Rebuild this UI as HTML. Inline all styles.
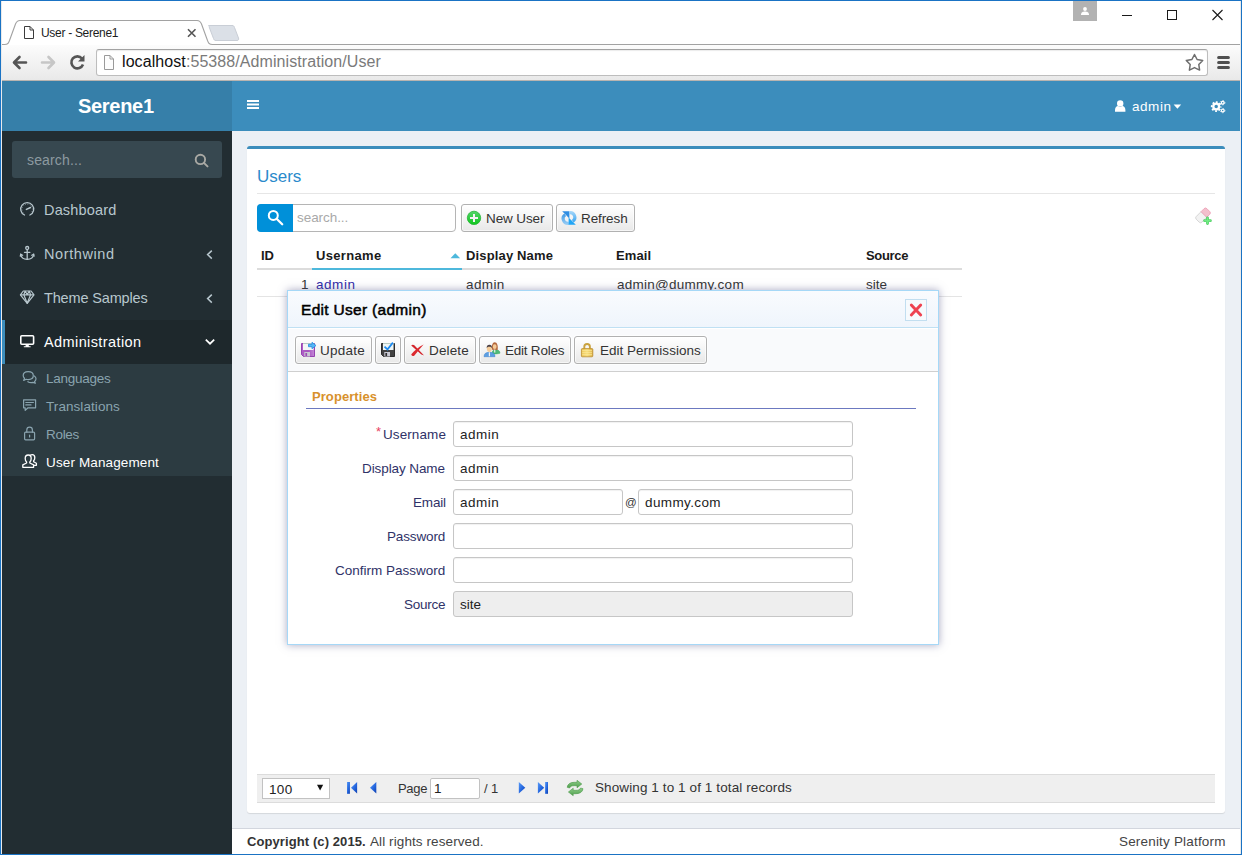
<!DOCTYPE html>
<html><head><meta charset="utf-8"><title>User - Serene1</title>
<style>
*{box-sizing:border-box}
html,body{margin:0;padding:0}
body{width:1242px;height:855px;position:relative;overflow:hidden;background:#fff;font-family:"Liberation Sans",sans-serif;font-size:13px;color:#333}
.a{position:absolute}
.t{position:absolute;white-space:nowrap;line-height:20px;height:20px}
svg{position:absolute;overflow:visible}
#frame{left:0;top:0;width:1242px;height:855px;border:1px solid #1a73c4;pointer-events:none}
#frame2{left:1px;top:1px;width:1240px;height:853px;border:1px solid #eaeaea;border-top:none;border-bottom:none;pointer-events:none}
#titlebar{left:1px;top:1px;width:1240px;height:44px;background:#fff}
#toolbar{left:1px;top:45px;width:1240px;height:36px;background:linear-gradient(#fcfcfc,#e9e9e9);border-bottom:1px solid #b9b4b0}
#url{left:96px;top:49px;width:1112px;height:27px;background:#fff;border:1px solid #bdbdbd;border-top-color:#a2a2a2;border-radius:3px;box-shadow:inset 0 1px 1px rgba(0,0,0,.08)}
.btn{position:absolute;border:1px solid #b1b1b1;border-radius:3px;background:linear-gradient(#ffffff,#f4f4f4 50%,#e8e8e8);box-shadow:inset 0 0 0 1px rgba(255,255,255,.6),0 0 0 1px rgba(255,255,255,.7)}
.inp{position:absolute;height:26px;border:1px solid #c6c6c6;border-radius:3px;background:#fff;box-shadow:inset 0 1px 1px rgba(0,0,0,.06)}
</style></head><body>
<div class="a" id="titlebar"></div>
<div class="a" id="toolbar"></div>
<div class="a" id="url"></div>
<!-- tab strip -->
<svg class="a" style="left:0;top:0" width="1242" height="46" viewBox="0 0 1242 46">
 <path d="M4.5 45 C8 44.5 8.5 43 9.5 40.5 L15.5 24 C16.5 21.5 17.5 21 20 21 H197 C199.5 21 200.5 21.5 201.5 24 L207.5 40.5 C208.5 43 209 44.5 212.5 45 Z" fill="#fff"/>
 <path d="M1 44.5 H4.5 C8 44.5 8.5 43 9.5 40.5 L15.5 24 C16.5 21.5 17.5 20.5 20 20.5 H197 C199.5 20.5 200.5 21.5 201.5 24 L207.5 40.5 C208.5 43 209 44.5 212.5 44.5 H1241" fill="none" stroke="#a2a2a2" stroke-width="1.1"/>
 <path d="M208.5 25.5 H232 C233.5 25.5 234 26 234.5 27.5 L238.5 38 C239 39.5 238.5 40.5 237 40.5 H216 C214.5 40.5 214 40 213.5 38.5 L209.5 28 C209 26.5 209 25.5 210.5 25.5 Z" fill="#dbe0e7" stroke="#c9ced6" stroke-width="1"/>
 <!-- tab page icon -->
 <path d="M24.5 26.5 H30 L33.5 30 V38.5 H24.5 Z M30 26.5 V30 H33.5" fill="#fff" stroke="#3c3c3c" stroke-width="1"/>
 <!-- tab close -->
 <path d="M188 29.300 L195.500 36.800 M195.500 29.300 L188 36.800" stroke="#555" stroke-width="1.600" fill="none"/>
 <!-- user button -->
 <rect x="1073" y="1" width="24" height="20" fill="#b2b2b2"/>
 <circle cx="1085" cy="9" r="1.9" fill="#fff"/><path d="M1081 15 C1081 12 1083 11.5 1085 11.5 C1087 11.5 1089 12 1089 15 Z" fill="#fff"/>
 <!-- window controls -->
 <path d="M1122 15.500 H1132" stroke="#1a1a1a" stroke-width="1"/>
 <rect x="1167.500" y="10.500" width="9" height="9" fill="none" stroke="#1a1a1a" stroke-width="1"/>
 <path d="M1212.500 10 L1222.500 20 M1222.500 10 L1212.500 20" stroke="#1a1a1a" stroke-width="1.1"/>
</svg>
<!-- nav buttons -->
<svg class="a" style="left:0;top:45px" width="1242" height="36" viewBox="0 45 1242 36">
 <path d="M26 62.500 H14.500 M19.500 57 L14 62.500 L19.500 68" fill="none" stroke="#555" stroke-width="2.600" stroke-linecap="round" stroke-linejoin="round"/>
 <path d="M42 62.500 H53.500 M48.500 57 L54 62.500 L48.500 68" fill="none" stroke="#c6c6c6" stroke-width="2.600" stroke-linecap="round" stroke-linejoin="round"/>
 <path d="M82 58.500 A6 6 0 1 0 83 64.500" fill="none" stroke="#555" stroke-width="2.600"/>
 <path d="M84.500 55 V61.500 H78 Z" fill="#555"/>
 <!-- url page icon -->
 <path d="M104.500 55.500 H110 L113.500 59 V69.500 H104.500 Z M110 55.500 V59 H113.500" fill="#fdfdfd" stroke="#9a9a9a" stroke-width="1"/>
 <!-- star -->
 <path d="M1194.5 54.5 L1197.1 59.5 L1202.7 60.4 L1198.8 64.5 L1199.6 70.1 L1194.5 67.6 L1189.4 70.1 L1190.2 64.5 L1186.3 60.4 L1191.9 59.5 Z" fill="#fff" stroke="#6e6e6e" stroke-width="1.500" stroke-linejoin="round"/>
 <!-- menu -->
 <path d="M1218.600 57.500 H1228.400 M1218.600 62.500 H1228.400 M1218.600 67.500 H1228.400" stroke="#505050" stroke-width="3" stroke-linecap="round"/>
</svg>
<!-- ===== page backgrounds ===== -->
<div class="a" style="left:2px;top:81px;width:1238px;height:773px;background:#ecf0f5"></div>
<div class="a" style="left:2px;top:81px;width:230px;height:50px;background:#367fa9"></div>
<div class="a" style="left:232px;top:81px;width:1008px;height:50px;background:#3c8dbc"></div>
<div class="a" style="left:2px;top:131px;width:230px;height:723px;background:#222d32"></div>
<div class="a" style="left:12px;top:141px;width:210px;height:37px;background:#374850;border-radius:3px"></div>
<div class="a" style="left:2px;top:320px;width:230px;height:44px;background:#1e282c;border-left:3px solid #3c8dbc"></div>
<div class="a" style="left:2px;top:364px;width:230px;height:112px;background:#2c3b41"></div>
<!-- content box -->
<div class="a" style="left:247px;top:146px;width:978px;height:667px;background:#fff;border-top:3px solid #3c8dbc;border-radius:3px;box-shadow:0 1px 1px rgba(0,0,0,.1)"></div>
<div class="a" style="left:257px;top:193px;width:958px;height:1px;background:#e6e6e6"></div>
<!-- footer -->
<div class="a" style="left:232px;top:828px;width:1008px;height:26px;background:#fff;border-top:1px solid #d2d6de"></div>
<!-- quick search -->
<div class="a" style="left:257px;top:204px;width:199px;height:28px;border:1px solid #b5b5b5;border-radius:4px;background:#fff"></div>
<div class="a" style="left:257px;top:204px;width:36px;height:28px;background:#0090d9;border-radius:4px 0 0 4px"></div>
<svg style="left:257px;top:204px" width="36" height="28" viewBox="257 204 36 28"><circle cx="273.300" cy="215.400" r="4.500" fill="none" stroke="#fff" stroke-width="2"/><path d="M276.600 218.700 L282.200 224.200" stroke="#fff" stroke-width="2.300" stroke-linecap="round"/></svg>
<!-- grid toolbar buttons -->
<div class="btn" style="left:461px;top:204px;width:92px;height:28px"></div>
<div class="btn" style="left:556px;top:204px;width:79px;height:28px"></div>
<!-- grid header lines -->
<div class="a" style="left:257px;top:268px;width:705px;height:2px;background:#dcdcdc"></div>
<div class="a" style="left:312px;top:268px;width:150px;height:2px;background:#4db8dc"></div>
<div class="a" style="left:257px;top:296px;width:705px;height:1px;background:#e4e4e4"></div>
<svg style="left:450px;top:252px" width="12" height="8" viewBox="450 252 12 8"><path d="M450.500 258.200 L455.300 253.200 L460.100 258.200 Z" fill="#4db8dc"/></svg>
<!-- pager -->
<div class="a" style="left:257px;top:774px;width:958px;height:29px;background:#efefef;border-top:1px solid #dcdcdc;border-bottom:1px solid #dcdcdc"></div>
<div class="a" style="left:262px;top:778px;width:68px;height:21px;background:#fff;border:1px solid #c2c2c2"></div>
<div class="a" style="left:430px;top:778px;width:50px;height:21px;background:#fff;border:1px solid #c2c2c2;border-radius:2px"></div>
<svg style="left:257px;top:774px" width="400" height="29" viewBox="257 774 400 29">
<defs><linearGradient id="pb" x1="0" y1="0" x2="1" y2="1"><stop offset="0" stop-color="#5a9cf8"/><stop offset=".55" stop-color="#2466de"/><stop offset="1" stop-color="#0f3fae"/></linearGradient>
<linearGradient id="gg" x1="0" y1="0" x2="0" y2="1"><stop offset="0" stop-color="#8fce8a"/><stop offset="1" stop-color="#4f9f4d"/></linearGradient></defs>
<path d="M317 784.800 H323.200 L320.100 790.400 Z" fill="#111"/>
<rect x="347" y="782" width="2.900" height="11.800" fill="url(#pb)"/><path d="M357.100 782 V793.400 L351 787.700 Z" fill="url(#pb)"/>
<path d="M376.300 782 V793.400 L370 787.700 Z" fill="url(#pb)"/>
<path d="M518.800 782 V793.400 L525.300 787.700 Z" fill="url(#pb)"/>
<path d="M537.900 782 V793.400 L544.200 787.700 Z" fill="url(#pb)"/><rect x="545.100" y="782" width="2.900" height="11.800" fill="url(#pb)"/>
<!-- green refresh -->
<path d="M567.200 787.300 C567.600 783.800 570.600 782.300 574.200 782.300 H577 V780.300 L581.800 784 L577 787.800 V785.700 H574.400 C571.800 785.700 570.300 786.200 569.600 788 Z" fill="url(#gg)" stroke="#4c994a" stroke-width=".6"/>
<path d="M583 788.700 C582.600 792.200 579.600 793.700 576 793.700 H573.200 V795.700 L568.400 792 L573.200 788.200 V790.300 H575.800 C578.400 790.300 579.900 789.800 580.600 788 Z" fill="url(#gg)" stroke="#4c994a" stroke-width=".6"/>
</svg>
<!-- header + sidebar icons -->
<svg style="left:0;top:81px" width="1242" height="400" viewBox="0 81 1242 400" fill="none">
<!-- hamburger -->
<path d="M247 101 H259 M247 104.500 H259 M247 108 H259" stroke="#fff" stroke-width="2"/>
<!-- user -->
<circle cx="1120.200" cy="103.400" r="3.200" fill="#fff"/>
<path d="M1115 111.700 V110 C1115 107.200 1116.600 106.200 1118 106 C1119.300 106.900 1121.100 106.900 1122.400 106 C1123.800 106.200 1125.400 107.200 1125.400 110 V111.700 Z" fill="#fff"/>
<!-- caret -->
<path d="M1173.600 104.500 H1181.200 L1177.400 108.800 Z" fill="#fff"/>
<!-- gears -->
<g fill="none" stroke="#fff">
<circle cx="1216.200" cy="106.600" r="2.900" stroke-width="2.300"/>
<circle cx="1216.200" cy="106.600" r="4.500" stroke-width="1.700" stroke-dasharray="1.850 1.684" stroke-dashoffset=".9"/>
<circle cx="1222.700" cy="102.700" r="1.350" stroke-width="1.200"/>
<circle cx="1222.700" cy="102.700" r="2.150" stroke-width="1" stroke-dasharray="1.100 1.151"/>
<circle cx="1222.700" cy="110.600" r="1.350" stroke-width="1.200"/>
<circle cx="1222.700" cy="110.600" r="2.150" stroke-width="1" stroke-dasharray="1.100 1.151"/>
</g>
<!-- sidebar search -->
<circle cx="200.400" cy="159.400" r="4.700" stroke="#a9a9a4" stroke-width="1.900"/>
<path d="M203.900 162.900 L207.500 166.400" stroke="#a9a9a4" stroke-width="2" stroke-linecap="round"/>
<!-- dashboard gauge -->
<g stroke="#b8c7ce" stroke-linecap="round">
<path d="M24.500 215 A6.500 6.500 0 1 1 29.900 215" stroke-width="1.300"/>
<path d="M26.400 209.400 L30.500 207.500" stroke-width="1.500"/>
<path d="M23 212.500 A5.200 5.200 0 1 1 31.400 212.500" stroke-width="1" stroke-dasharray=".6 1.700" stroke-linecap="butt" opacity=".8"/>
</g>
<!-- anchor -->
<g stroke="#b8c7ce" stroke-width="1.300" stroke-linecap="round">
<circle cx="27.200" cy="248" r="1.500"/>
<path d="M27.200 249.600 V259.300 M24.500 252.300 H29.900"/>
<path d="M20.800 254.500 C21.200 257.500 23.500 259.300 27.200 259.300 C30.900 259.300 33.200 257.500 33.600 254.500"/>
<path d="M20.300 256.200 L20.800 254.200 L22.600 255.200 M34.100 256.200 L33.600 254.200 L31.800 255.200"/>
</g>
<!-- diamond -->
<g stroke="#b8c7ce" stroke-width="1.200" stroke-linejoin="round">
<path d="M23.300 291 H31.100 L34 294.800 L27.200 303.300 L20.400 294.800 Z"/>
<path d="M20.400 294.800 H34 M25.200 291 L23.800 294.800 L27.200 303.300 L30.600 294.800 L29.200 291 M25.200 291 L27.200 294.800 L29.200 291"/>
</g>
<!-- monitor -->
<rect x="20.800" y="335.800" width="12.800" height="8.400" rx="1" stroke="#fff" stroke-width="1.600"/>
<path d="M25.600 344.500 H28.800 V346.200 H30.600 V347.200 H23.800 V346.200 H25.600 Z" fill="#fff"/>
<!-- chevrons -->
<path d="M211.800 250.600 L207.600 254.600 L211.800 258.600 M211.800 294.600 L207.600 298.600 L211.800 302.600" stroke="#b8c7ce" stroke-width="1.500"/>
<path d="M205.800 339.600 L210 343.700 L214.200 339.600" stroke="#fff" stroke-width="1.700"/>
<!-- submenu icons -->
<g stroke="#8aa4af" stroke-width="1.200" stroke-linejoin="round" stroke-linecap="round">
<!-- languages: two bubbles -->
<path d="M28.200 371.600 C31.300 371.600 33.300 373.300 33.300 375.600 C33.300 377.900 31.300 379.600 28.200 379.600 C27.500 379.600 26.800 379.500 26.200 379.300 L23.700 380.400 L24.500 378.300 C23.600 377.600 23.200 376.700 23.200 375.600 C23.200 373.300 25.200 371.600 28.200 371.600 Z"/>
<path d="M34.300 376 C35.400 376.700 36 377.700 36 378.800 C36 379.900 35.500 380.800 34.600 381.500 L35.300 383.300 L33 382.400 C32.400 382.600 31.800 382.700 31.100 382.700 C29.800 382.700 28.700 382.300 27.900 381.700"/>
<!-- translations: message -->
<path d="M23.600 399.800 H35.600 V407.800 H28 L25.200 410.400 V407.800 H23.600 Z"/>
<path d="M25.800 402.500 H33.400 M25.800 404.900 H31"/>
<!-- lock -->
<rect x="24.600" y="432.200" width="10" height="7.600" rx="1"/>
<path d="M26.800 432.200 V430 A2.800 2.800 0 0 1 32.400 430 V432.200 M29.600 435.200 V437"/>
</g>
<!-- users (white) -->
<g stroke="#fff" stroke-width="1.300" stroke-linejoin="round" stroke-linecap="round">
<path d="M28.200 455 C30 455 31.200 456.400 31.200 458.400 C31.200 460 30.600 461.200 29.800 461.900 V463 L33.600 464.800 V467.300 H22.800 V464.800 L26.600 463 V461.900 C25.800 461.200 25.200 460 25.200 458.400 C25.200 456.400 26.400 455 28.200 455 Z"/>
<path d="M30.200 455.200 C31 454.700 31.600 454.600 32.200 454.600 C33.800 454.600 34.800 455.900 34.800 457.700 C34.800 459.100 34.300 460.200 33.600 460.800 V461.700 L36.400 463.200 V465.300 H34.400"/>
</g>
</svg>
<!-- grid toolbar icons -->
<svg style="left:460px;top:204px" width="780" height="28" viewBox="460 204 780 28">
<defs><linearGradient id="gc" x1="0" y1="0" x2="0" y2="1"><stop offset="0" stop-color="#55d36a"/><stop offset="1" stop-color="#0fc71d"/></linearGradient>
<linearGradient id="rb1" gradientUnits="userSpaceOnUse" x1="0" y1="212" x2="0" y2="225"><stop offset="0" stop-color="#2f8fe0"/><stop offset="1" stop-color="#9dd0f6"/></linearGradient>
<linearGradient id="rb2" gradientUnits="userSpaceOnUse" x1="0" y1="211" x2="0" y2="224"><stop offset="0" stop-color="#a9d8f9"/><stop offset="1" stop-color="#2a9df0"/></linearGradient></defs>
<circle cx="474" cy="217.900" r="6.700" fill="url(#gc)" stroke="#24b436" stroke-width=".8"/>
<path d="M470 217.900 H478 M474 213.900 V221.900" stroke="#f6f0f6" stroke-width="2"/>
<!-- refresh -->
<path d="M568.800 223.200 A4.700 4.700 0 0 1 565.200 214.700" fill="none" stroke="url(#rb1)" stroke-width="3.100"/>
<path d="M562.200 211.200 H569.400 V218.400 Z" fill="#2f8de2"/>
<path d="M569.200 212.800 A4.700 4.700 0 0 1 572.800 221.300" fill="none" stroke="url(#rb2)" stroke-width="3.100"/>
<path d="M575.800 224.800 H568.600 V217.600 Z" fill="#22a6f6"/>
<!-- eraser -->
<g transform="rotate(-45 1203 215.400)">
<path d="M1197.500 211.400 H1204.300 V219.400 H1197.500 A2 2 0 0 1 1195.500 217.400 V213.400 A2 2 0 0 1 1197.500 211.400 Z" fill="#f2f2f2" stroke="#cfcfcf" stroke-width=".8"/>
<path d="M1204.300 211.400 H1208.500 A2 2 0 0 1 1210.500 213.400 V217.400 A2 2 0 0 1 1208.500 219.400 H1204.300 Z" fill="#f3bfcd" stroke="#ec9db3" stroke-width=".8"/>
</g>
<path d="M1207.500 217.800 V223.600 M1204.600 220.700 H1210.400" stroke="#4fce64" stroke-width="2.800" stroke-linecap="round"/>
<path d="M1207.500 218 V223.400 M1204.800 220.700 H1210.200" stroke="#72ea84" stroke-width="1.500" stroke-linecap="round"/>
</svg>

<!-- texts -->
<div class="t" style="left:41px;top:23px;font-size:12px;color:#1c1c1c;letter-spacing:-0.3px;">User - Serene1</div>
<div class="t" style="left:122px;top:52px;font-size:16px;color:#111;letter-spacing:0.08px;"><span>localhost</span><span style="color:#7a7a7a">:55388/Administration/User</span></div>
<div class="t" style="left:78px;top:96px;font-size:20px;color:#fff;font-weight:700;letter-spacing:-0.3px;">Serene1</div>
<div class="t" style="left:1132px;top:97px;font-size:13.5px;color:#fff;letter-spacing:0.55px;">admin</div>
<div class="t" style="left:27px;top:150px;font-size:14px;color:#8d9aa0;letter-spacing:0.16px;">search...</div>
<div class="t" style="left:44px;top:200px;font-size:14.5px;color:#b8c7ce;letter-spacing:0.16px;">Dashboard</div>
<div class="t" style="left:44px;top:244px;font-size:14.5px;color:#b8c7ce;letter-spacing:0.6px;">Northwind</div>
<div class="t" style="left:44px;top:288px;font-size:14.5px;color:#b8c7ce;letter-spacing:-0.15px;">Theme Samples</div>
<div class="t" style="left:44px;top:332px;font-size:14.5px;color:#fff;letter-spacing:0.4px;">Administration</div>
<div class="t" style="left:46px;top:369px;font-size:13.5px;color:#8aa4af;letter-spacing:-0.25px;">Languages</div>
<div class="t" style="left:46px;top:397px;font-size:13.5px;color:#8aa4af;letter-spacing:0.07px;">Translations</div>
<div class="t" style="left:46px;top:425px;font-size:13.5px;color:#8aa4af;letter-spacing:-0.3px;">Roles</div>
<div class="t" style="left:46px;top:453px;font-size:13.5px;color:#fff;letter-spacing:0.13px;">User Management</div>
<div class="t" style="left:257px;top:167px;font-size:17px;color:#2a8acb;letter-spacing:-0.03px;">Users</div>
<div class="t" style="left:297px;top:208px;font-size:13.5px;color:#a9a9a9;letter-spacing:-0.06px;">search...</div>
<div class="t" style="left:486px;top:209px;font-size:13.5px;color:#333;letter-spacing:-0.11px;">New User</div>
<div class="t" style="left:581px;top:209px;font-size:13.5px;color:#333;letter-spacing:-0.1px;">Refresh</div>
<div class="t" style="left:261px;top:246px;font-size:13px;color:#1a1a1a;font-weight:700;">ID</div>
<div class="t" style="left:316px;top:246px;font-size:13px;color:#1a1a1a;font-weight:700;letter-spacing:0.33px;">Username</div>
<div class="t" style="left:466px;top:246px;font-size:13px;color:#1a1a1a;font-weight:700;letter-spacing:0.15px;">Display Name</div>
<div class="t" style="left:616px;top:246px;font-size:13px;color:#1a1a1a;font-weight:700;letter-spacing:0.08px;">Email</div>
<div class="t" style="left:866px;top:246px;font-size:13px;color:#1a1a1a;font-weight:700;letter-spacing:-0.34px;">Source</div>
<div class="t" style="left:301px;top:275px;font-size:13.5px;color:#333;">1</div>
<div class="t" style="left:316px;top:275px;font-size:13.5px;color:#2f2aa8;letter-spacing:0.55px;">admin</div>
<div class="t" style="left:466px;top:275px;font-size:13.5px;color:#333;letter-spacing:0.4px;">admin</div>
<div class="t" style="left:617px;top:275px;font-size:13.5px;color:#333;letter-spacing:0.26px;">admin@dummy.com</div>
<div class="t" style="left:866px;top:275px;font-size:13.5px;color:#333;letter-spacing:-0.03px;">site</div>
<div class="t" style="left:269px;top:780px;font-size:13.5px;color:#222;letter-spacing:0.35px;">100</div>
<div class="t" style="left:398px;top:779px;font-size:13px;color:#333;letter-spacing:-0.33px;">Page</div>
<div class="t" style="left:434px;top:779px;font-size:13.5px;color:#222;">1</div>
<div class="t" style="left:484px;top:779px;font-size:13px;color:#333;">/</div>
<div class="t" style="left:491px;top:779px;font-size:13px;color:#333;">1</div>
<div class="t" style="left:595px;top:778px;font-size:13.5px;color:#333;letter-spacing:0.1px;">Showing 1 to 1 of 1 total records</div>
<div class="t" style="left:247px;top:832px;font-size:13px;color:#333;letter-spacing:0.09px;"><b>Copyright (c) 2015.</b></div>
<div class="t" style="left:370px;top:832px;font-size:13.5px;color:#444;letter-spacing:0.09px;">All rights reserved.</div>
<div class="t" style="left:1119px;top:832px;font-size:13.5px;color:#444;letter-spacing:0.18px;">Serenity Platform</div>
<!-- ===== dialog ===== -->
<div class="a" style="left:287px;top:290px;width:652px;height:355px;background:#fff;border:1px solid #a6d8f7;box-shadow:0 0 8px rgba(85,85,135,.5)"></div>
<div class="a" style="left:288px;top:291px;width:650px;height:37px;background:linear-gradient(#f9fbfe,#eff5fc);border-bottom:1px solid #bfe0f3"></div>
<div class="a" style="left:288px;top:328px;width:650px;height:44px;background:#f9fafc;border-top:1px solid #fff;border-bottom:1px solid #cfcfcf"></div>
<div class="a" style="left:905px;top:299px;width:22px;height:22px;border:1px solid #c2def0;background:#f6fafd"></div>
<svg style="left:905px;top:299px" width="22" height="22" viewBox="905 299 22 22"><path d="M911.300 305 L920.700 315 M920.700 305 L911.300 315" stroke="#ee4351" stroke-width="2.900" stroke-linecap="round"/></svg>
<div class="btn" style="left:295px;top:336px;width:77px;height:28px"></div>
<div class="btn" style="left:375px;top:336px;width:26px;height:28px"></div>
<div class="btn" style="left:404px;top:336px;width:72px;height:28px"></div>
<div class="btn" style="left:479px;top:336px;width:92px;height:28px"></div>
<div class="btn" style="left:574px;top:336px;width:133px;height:28px"></div>
<div class="a" style="left:306px;top:408px;width:610px;height:1px;background:#6c79c0"></div>
<div class="inp" style="left:453px;top:421px;width:400px"></div>
<div class="inp" style="left:453px;top:455px;width:400px"></div>
<div class="inp" style="left:453px;top:489px;width:170px"></div>
<div class="inp" style="left:638px;top:489px;width:215px"></div>
<div class="inp" style="left:453px;top:523px;width:400px"></div>
<div class="inp" style="left:453px;top:557px;width:400px"></div>
<div class="inp" style="left:453px;top:591px;width:400px;background:#eeeeee;box-shadow:none"></div>
<!-- dialog toolbar icons -->
<svg style="left:295px;top:337px" width="420" height="27" viewBox="295 337 420 27">
<defs><linearGradient id="pu" x1="0" y1="0" x2="1" y2="0"><stop offset="0" stop-color="#b05fc8"/><stop offset=".5" stop-color="#a655be"/><stop offset="1" stop-color="#c487d8"/></linearGradient>
<linearGradient id="gold" x1="0" y1="0" x2="1" y2="0"><stop offset="0" stop-color="#e9c04c"/><stop offset=".5" stop-color="#f7dd78"/><stop offset="1" stop-color="#dcae3c"/></linearGradient></defs>
<!-- update: purple disk + arrow -->
<path d="M301.500 343.500 H314.500 V356.500 H303.500 L301.500 354.500 Z" fill="url(#pu)" stroke="#9544b0" stroke-width="1"/>
<rect x="303" y="343" width="10.500" height="7" fill="#f4f7f6"/><rect x="303" y="343" width="10.500" height="1" fill="#b9cbc4"/>
<rect x="304.300" y="352" width="5.700" height="4.500" fill="#c9c7d2"/><rect x="305.400" y="353" width="1.700" height="3" fill="#9a4bb4"/>
<path d="M308.500 344.300 H312 V342.300 L316 345.500 L312 348.700 V346.700 H308.500 Z" fill="#55b7f5" stroke="#2e8fe2" stroke-width=".9" stroke-linejoin="round"/>
<!-- apply: black disk + check -->
<path d="M381.500 343.500 H394.500 V356.500 H383.500 L381.500 354.500 Z" fill="#414141" stroke="#2c2c2c" stroke-width="1"/>
<rect x="383" y="343" width="10.500" height="7" fill="#eef5f4"/><rect x="383" y="343" width="10.500" height="1" fill="#b9cbc4"/>
<rect x="384.300" y="352" width="5.700" height="4.500" fill="#c9c9d4"/><rect x="385.400" y="353" width="1.700" height="3" fill="#2c2c2c"/>
<path d="M384.500 346.600 L387.500 349.400 L392.900 342.600" fill="none" stroke="#1b8af2" stroke-width="1.700"/>
<!-- delete X -->
<path d="M411.200 345.600 C412 344.600 413.400 344.400 414.300 345.300 L424.100 355.400 C422.500 355.100 421.300 354.500 420.200 353.500 Z" fill="#d3242b"/>
<path d="M411.300 354.200 C414.500 350.500 418.500 346.800 423.600 344.400 C420.500 347.800 417.200 351.800 414.200 355.800 C413 356.400 411.200 355.600 411.300 354.200 Z" fill="#dc2a30"/>
<!-- roles: two users -->
<path d="M492 353.700 C492 350.800 493.400 349.800 495.500 349.800 C498 349.800 500 350.800 500 353.200 C498 354 494 354 492 353.700 Z" fill="#4fb978" stroke="#3aa463" stroke-width=".5"/>
<path d="M491.900 349.800 C491.500 345.500 492.500 342.200 494.700 342.200 C497 342.200 498.300 345.500 497.600 350 Z" fill="#b4683c"/>
<ellipse cx="494.700" cy="346.700" rx="1.900" ry="2.400" fill="#f6cc98"/>
<rect x="494.200" y="349.500" width="1.100" height="3" fill="#f4f4f4"/>
<path d="M484 356.700 C484 353.600 485.800 352.300 489.400 352.300 C493 352.300 495 353.600 495 356.700 Z" fill="#5d9fe2" stroke="#3f82cc" stroke-width=".5"/>
<rect x="488.800" y="352.300" width="1.200" height="4" fill="#f4f4f4"/>
<ellipse cx="489.300" cy="348.800" rx="2.500" ry="3.100" fill="#f6cc98"/>
<path d="M486.700 348.300 C486.500 345.800 487.700 344.700 489.400 344.700 C491.100 344.700 492.200 345.800 492 348.300 C491.200 347 490.600 346.800 489.300 346.800 C488 346.800 487.400 347 486.700 348.300 Z" fill="#4b4044"/>
<!-- permissions: lock -->
<path d="M584.300 349 V346.800 A2.800 2.800 0 0 1 589.900 346.800 V349" fill="none" stroke="#c9a23f" stroke-width="1.900"/>
<rect x="581.400" y="348.600" width="11.400" height="8.200" rx=".8" fill="url(#gold)" stroke="#b98c32" stroke-width=".8"/>
<path d="M582.200 350.700 H592 M582.200 352.700 H592 M582.200 354.700 H592" stroke="#fbe9a0" stroke-width=".8"/>
</svg>

<div class="t" style="left:301px;top:300px;font-size:15.5px;color:#000;letter-spacing:0.3px;-webkit-text-stroke:0.5px #000;">Edit User (admin)</div>
<div class="t" style="left:320px;top:341px;font-size:13.5px;color:#333;letter-spacing:0.24px;">Update</div>
<div class="t" style="left:429px;top:341px;font-size:13.5px;color:#333;letter-spacing:0.14px;">Delete</div>
<div class="t" style="left:505px;top:341px;font-size:13.5px;color:#333;letter-spacing:-0.23px;">Edit Roles</div>
<div class="t" style="left:600px;top:341px;font-size:13.5px;color:#333;letter-spacing:0.01px;">Edit Permissions</div>
<div class="t" style="left:312px;top:387px;font-size:13px;color:#d8912c;font-weight:700;letter-spacing:0.07px;">Properties</div>
<div class="t" style="left:376px;top:422px;font-size:13px;color:#e8415f;">*</div>
<div class="t" style="left:383px;top:425px;font-size:13.5px;color:#2f3268;letter-spacing:0.09px;">Username</div>
<div class="t" style="left:362px;top:459px;font-size:13.5px;color:#2f3268;letter-spacing:-0.09px;">Display Name</div>
<div class="t" style="left:413px;top:493px;font-size:13.5px;color:#2f3268;letter-spacing:-0.17px;">Email</div>
<div class="t" style="left:387px;top:527px;font-size:13.5px;color:#2f3268;letter-spacing:-0.14px;">Password</div>
<div class="t" style="left:335px;top:561px;font-size:13.5px;color:#2f3268;">Confirm Password</div>
<div class="t" style="left:404px;top:595px;font-size:13.5px;color:#2f3268;letter-spacing:-0.26px;">Source</div>
<div class="t" style="left:460px;top:425px;font-size:13.5px;color:#222;letter-spacing:0.5px;">admin</div>
<div class="t" style="left:460px;top:459px;font-size:13.5px;color:#222;letter-spacing:0.5px;">admin</div>
<div class="t" style="left:460px;top:493px;font-size:13.5px;color:#222;letter-spacing:0.5px;">admin</div>
<div class="t" style="left:625px;top:492px;font-size:11.5px;color:#333;">@</div>
<div class="t" style="left:645px;top:493px;font-size:13.5px;color:#222;letter-spacing:0.38px;">dummy.com</div>
<div class="t" style="left:460px;top:595px;font-size:13.5px;color:#222;">site</div>
<div class="a" id="frame2"></div>
<div class="a" id="frame"></div>
</body></html>
